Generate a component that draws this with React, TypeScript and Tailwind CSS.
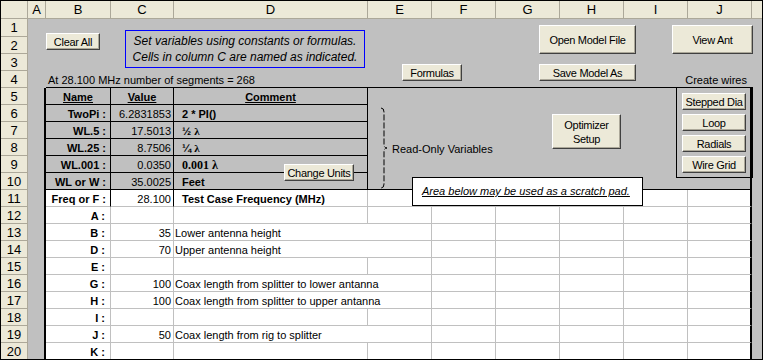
import React from "react";

const cols = [
  { l: "A", w: "w-[18px]" },
  { l: "B", w: "w-[65px]" },
  { l: "C", w: "w-[63px]" },
  { l: "D", w: "w-[194px]" },
  { l: "E", w: "w-[64px]" },
  { l: "F", w: "w-[64px]" },
  { l: "G", w: "w-[64px]" },
  { l: "H", w: "w-[64px]" },
  { l: "I", w: "w-[64px]" },
  { l: "J", w: "w-[64px]" },
];

const mid = ["E", "F", "G", "H", "I"];

function RowHead({ n, last }: { n: number; last?: boolean }) {
  return (
    <div
      className={`w-[27px] shrink-0 flex items-center justify-center bg-[#ece9d8] border-r border-[#aca899] text-[13px] ${
        last ? "" : "border-b"
      }`}
    >
      {n}
    </div>
  );
}

function Cell({
  w,
  className = "",
  children,
}: {
  w: string;
  className?: string;
  children?: React.ReactNode;
}) {
  return <div className={`${w} shrink-0 flex items-end whitespace-nowrap ${className}`}>{children}</div>;
}

function Btn({ className = "", children }: { className?: string; children: React.ReactNode }) {
  return (
    <button
      type="button"
      className={`absolute flex items-center justify-center bg-[#ece9d8] border border-t-white border-l-white border-r-[#404040] border-b-[#404040] shadow-[inset_-1px_-1px_0_#aca899] text-[11px] leading-[14px] tracking-[-0.3px] text-black text-center ${className}`}
    >
      {children}
    </button>
  );
}

const Lam = () => <span className="font-['Liberation_Serif',serif] font-bold">λ</span>;

const table = [
  { n: 6, name: "TwoPi :", val: "6.2831853", note: <span className="font-bold">2 * PI()</span> },
  { n: 7, name: "WL.5 :", val: "17.5013", note: <span className="font-bold">½ <Lam /></span> },
  { n: 8, name: "WL.25 :", val: "8.7506", note: <span className="font-bold">¼ <Lam /></span> },
  {
    n: 9,
    name: "WL.001 :",
    val: "0.0350",
    note: <span className="font-['Liberation_Serif',serif] font-bold text-[12px]">0.001 λ</span>,
  },
  { n: 10, name: "WL or W :", val: "35.0025", note: <span className="font-bold">Feet</span> },
];

const lower = [
  { n: 12, label: "A :", val: "", note: "" },
  { n: 13, label: "B :", val: "35", note: "Lower antenna height" },
  { n: 14, label: "D :", val: "70", note: "Upper antenna height" },
  { n: 15, label: "E :", val: "", note: "" },
  { n: 16, label: "G :", val: "100", note: "Coax length from splitter to lower antanna" },
  { n: 17, label: "H :", val: "100", note: "Coax length from splitter to upper antanna" },
  { n: 18, label: "I :", val: "", note: "" },
  { n: 19, label: "J :", val: "50", note: "Coax length from rig to splitter" },
  { n: 20, label: "K :", val: "", note: "" },
];

export default function App() {
  return (
    <div className="relative w-[763px] h-[360px] overflow-hidden border border-black bg-[#c0c0c0] font-['Liberation_Sans',Arial,sans-serif] text-[11px] leading-[13px] text-black">
      {/* column headers */}
      <div className="flex h-[18px]">
        <div className="w-[27px] shrink-0 bg-[#ece9d8] border-r border-b border-[#aca899]" />
        {cols.map((c) => (
          <div
            key={c.l}
            className={`${c.w} shrink-0 flex items-center justify-center bg-[#ece9d8] border-r border-b border-[#aca899] text-[13px]`}
          >
            {c.l}
          </div>
        ))}
        <div className="flex-1 bg-[#ece9d8] border-b border-[#aca899]" />
      </div>

      {/* rows 1-3 */}
      <div className="flex h-[18px]">
        <RowHead n={1} />
        <div className="flex-1" />
      </div>
      {[2, 3].map((n) => (
        <div key={n} className="flex h-[17px]">
          <RowHead n={n} />
          <div className="flex-1" />
        </div>
      ))}

      {/* row 4 */}
      <div className="flex h-[17px]">
        <RowHead n={4} />
        <Cell w="w-[18px]" />
        <Cell w="w-[65px]" className="border-b border-black pl-[2px]">
          At 28.100 MHz number of segments = 268
        </Cell>
        <Cell w="w-[63px]" className="border-b border-black" />
        <Cell w="w-[194px]" className="border-b border-black" />
        {mid.map((m) => (
          <Cell key={m} w="w-[64px]" className="border-b border-black" />
        ))}
        <Cell w="w-[64px]" className="border-b border-black justify-end pr-[5px]">
          Create wires
        </Cell>
        <div className="flex-1" />
      </div>

      {/* row 5: table header */}
      <div className="flex h-[17px]">
        <RowHead n={5} />
        <Cell w="w-[18px]" className="border-r-2 border-black" />
        <Cell w="w-[65px]" className="border-r border-b border-black justify-center font-bold underline">
          Name
        </Cell>
        <Cell w="w-[63px]" className="border-r border-b border-black justify-center font-bold underline">
          Value
        </Cell>
        <Cell w="w-[194px]" className="border-r border-b border-black justify-center font-bold underline">
          Comment
        </Cell>
        {mid.map((m) => (
          <Cell key={m} w="w-[64px]" />
        ))}
        <Cell w="w-[64px]" className="border-r-2 border-black" />
        <div className="flex-1" />
      </div>

      {/* rows 6-10: read-only variables */}
      {table.map((r) => {
        const endRow = r.n === 10 ? "border-b border-black" : "";
        return (
          <div key={r.n} className="flex h-[17px]">
            <RowHead n={r.n} />
            <Cell w="w-[18px]" className="border-r-2 border-black" />
            <Cell w="w-[65px]" className="border-r border-b border-black justify-end pr-[4px] font-bold">
              {r.name}
            </Cell>
            <Cell w="w-[63px]" className="border-r border-b border-black justify-end pr-[2px]">
              {r.val}
            </Cell>
            <Cell w="w-[194px]" className="border-r border-b border-black pl-[8px]">
              {r.note}
            </Cell>
            {mid.map((m) => (
              <Cell key={m} w="w-[64px]" className={`${endRow} ${r.n === 8 && m === "E" ? "pl-[24px]" : ""}`}>
                {r.n === 8 && m === "E" ? "Read-Only Variables" : null}
              </Cell>
            ))}
            <Cell w="w-[64px]" className={`border-r-2 border-black ${endRow}`} />
            <div className="flex-1" />
          </div>
        );
      })}

      {/* row 11 */}
      <div className="flex h-[17px] bg-white">
        <RowHead n={11} />
        <Cell w="w-[18px]" className="bg-[#c0c0c0] border-r-2 border-black" />
        <Cell w="w-[65px]" className="border-r border-b border-r-black border-b-[#c0c0c0] justify-end pr-[4px] font-bold">
          Freq or F :
        </Cell>
        <Cell w="w-[63px]" className="border-r border-b border-r-black border-b-[#c0c0c0] justify-end pr-[2px]">
          28.100
        </Cell>
        <Cell w="w-[194px]" className="border-r border-b border-[#c0c0c0] pl-[8px] font-bold">
          Test Case Frequency (MHz)
        </Cell>
        {mid.map((m) => (
          <Cell key={m} w="w-[64px]" className="border-r border-b border-[#c0c0c0]" />
        ))}
        <Cell w="w-[64px]" className="border-r-2 border-b border-r-black border-b-[#c0c0c0]" />
        <div className="flex-1 bg-[#c0c0c0]" />
      </div>

      {/* rows 12-20: scratch variables */}
      {lower.map((r) => {
        const last = r.n === 20;
        const bb = last ? "" : "border-b";
        return (
          <div key={r.n} className={`flex bg-white ${last ? "h-[16px]" : "h-[17px]"}`}>
            <RowHead n={r.n} last={last} />
            <Cell w="w-[18px]" className="bg-[#c0c0c0] border-r-2 border-black" />
            <Cell w="w-[65px]" className={`border-r ${bb} border-[#c0c0c0] justify-end pr-[5px] font-bold`}>
              {r.label}
            </Cell>
            <Cell w="w-[63px]" className={`border-r ${bb} border-[#c0c0c0] justify-end pr-[2px]`}>
              {r.val}
            </Cell>
            <Cell w="w-[194px]" className={`${r.note ? "" : "border-r"} ${bb} border-[#c0c0c0] pl-[1px]`}>
              {r.note}
            </Cell>
            {mid.map((m) => (
              <Cell key={m} w="w-[64px]" className={`border-r ${bb} border-[#c0c0c0]`} />
            ))}
            <Cell w="w-[64px]" className={`border-r-2 ${bb} border-r-black border-b-[#c0c0c0]`} />
            <div className="flex-1 bg-[#c0c0c0]" />
          </div>
        );
      })}

      {/* floating controls */}
      <Btn className="left-[45px] top-[32px] w-[54px] h-[17px]">Clear All</Btn>

      <div className="absolute left-[124px] top-[29px] w-[240px] h-[38px] border border-[#0000ff] flex flex-col items-center justify-center italic text-[12px] leading-[16px]">
        <span>Set variables using constants or formulas.</span>
        <span>Cells in column C are named as indicated.</span>
      </div>

      <Btn className="left-[401px] top-[63px] w-[60px] h-[17px]">Formulas</Btn>
      <Btn className="left-[538px] top-[24px] w-[97px] h-[29px]">Open Model File</Btn>
      <Btn className="left-[671px] top-[24px] w-[81px] h-[29px]">View Ant</Btn>
      <Btn className="left-[538px] top-[63px] w-[97px] h-[17px]">Save Model As</Btn>

      <div className="absolute left-[675px] top-[86px] w-[77px] h-[91px] border border-black" />
      <Btn className="left-[681px] top-[92px] w-[64px] h-[17px]">Stepped Dia</Btn>
      <Btn className="left-[681px] top-[113px] w-[64px] h-[17px]">Loop</Btn>
      <Btn className="left-[681px] top-[134px] w-[64px] h-[17px]">Radials</Btn>
      <Btn className="left-[681px] top-[155px] w-[64px] h-[17px]">Wire Grid</Btn>

      <Btn className="left-[551px] top-[113px] w-[69px] h-[35px]">
        Optimizer
        <br />
        Setup
      </Btn>

      <Btn className="left-[283px] top-[163px] w-[70px] h-[17px]">Change Units</Btn>

      <svg className="absolute left-[378px] top-[106px]" width="12" height="84" viewBox="0 0 12 84">
        <path
          d="M2 1 Q5 1 5 5 V37 Q5 41 8 41 Q5 41 5 45 V77 Q5 81 2 81"
          fill="none"
          stroke="#000"
          strokeWidth="1"
          strokeDasharray="6 2"
        />
      </svg>

      <div className="absolute left-[411px] top-[176px] w-[231px] h-[29px] bg-white border border-black flex items-center pl-[9px] italic underline">
        Area below may be used as a scratch pad.
      </div>
    </div>
  );
}
